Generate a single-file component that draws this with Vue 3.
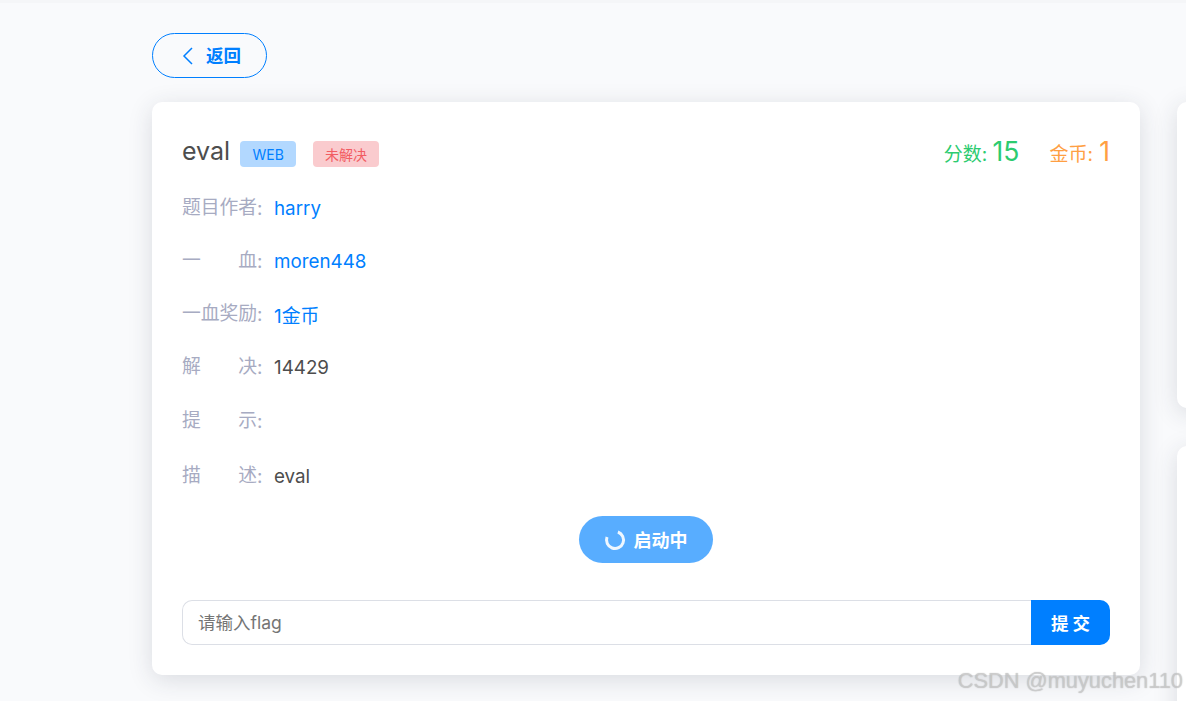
<script setup>
const rows = [
  { chars: ['题目作者'], value: 'harry', tone: 'blue' },
  { chars: ['一', '血'], value: 'moren448', tone: 'blue' },
  { chars: ['一血奖励'], value: '1金币', tone: 'blue' },
  { chars: ['解', '决'], value: '14429', tone: 'dark' },
  { chars: ['提', '示'], value: '', tone: 'dark' },
  { chars: ['描', '述'], value: 'eval', tone: 'dark' },
]
</script>

<template>
  <div class="page">
    <div class="topline"></div>
    <button class="back">
      <svg width="12" height="18" viewBox="0 0 12 18" fill="none"><path d="M10 1 2 9l8 8" stroke="#007fff" stroke-width="1.5"/></svg>
      <span>返回</span>
    </button>
    <div class="columns">
      <section class="card">
        <header class="head">
          <div class="title">
            <h1>eval</h1>
            <span class="tag tag-web">WEB</span>
            <span class="tag tag-red">未解决</span>
          </div>
          <div class="stats">
            <span class="green">分数: <b>15</b></span>
            <span class="orange">金币: <b>1</b></span>
          </div>
        </header>
        <div class="rows">
          <div v-for="r in rows" :key="r.chars[0]" class="row">
            <div class="label">
              <span v-for="c in r.chars" :key="c">{{ c }}</span>
            </div>
            <span class="colon">:</span>
            <span class="value" :class="r.tone">{{ r.value }}</span>
          </div>
        </div>
        <div class="launch-wrap">
          <button class="launch">
            <svg width="22" height="22" viewBox="0 0 22 22" fill="none"><path d="M13.9 3A8.5 8.5 0 1 1 3 8.1" stroke="#fff" stroke-width="3" opacity=".9"/></svg>
            <span>启动中</span>
          </button>
        </div>
        <div class="flag">
          <div class="input"><span>请输入flag</span></div>
          <button class="submit">提 交</button>
        </div>
      </section>
      <aside class="side">
        <div class="side-card one"></div>
        <div class="side-card two"></div>
      </aside>
    </div>
    <div class="mark">CSDN @muyuchen110</div>
  </div>
</template>

<style>
html, body { margin: 0; background: #f9fafc; }
</style>

<style scoped>
.page {
  position: relative;
  width: 1186px;
  height: 701px;
  overflow: hidden;
  background: #f9fafc;
  padding: 33px 0 0 152px;
  box-sizing: border-box;
  font-family: Inter, "Noto Sans CJK SC", sans-serif;
}
.topline { position: absolute; left: 0; right: 0; top: 0; height: 3px; background: #f5f6f8; }
button { font-family: inherit; border: 0; cursor: pointer; }
.back {
  display: flex;
  align-items: center;
  gap: 12px;
  width: 115px;
  height: 45px;
  padding: 0 0 3px 29px;
  box-sizing: border-box;
  border: 1px solid #007fff;
  border-radius: 23px;
  background: transparent;
  color: #007fff;
  font-size: 17.5px;
  font-weight: 700;
}
.back svg { margin-top: 3px; }
.columns { display: flex; gap: 37px; margin-top: 24px; }
.card {
  flex: none;
  width: 988px;
  height: 573px;
  box-sizing: border-box;
  padding: 30px;
  background: #fff;
  border-radius: 10px;
  box-shadow: 0 5px 25px rgba(40, 50, 70, .15);
  display: flex;
  flex-direction: column;
}
.head { display: flex; justify-content: space-between; align-items: center; height: 38px; }
.title { display: flex; align-items: center; padding-top: 6px; }
h1 { margin: 0 10px 0 0; font-size: 25px; font-weight: 400; color: #4d4d4d; line-height: 38px; position: relative; top: -3px; }
.tag {
  display: flex;
  align-items: center;
  justify-content: center;
  height: 26px;
  border-radius: 4px;
  font-size: 14px;
  box-sizing: border-box;
}
.tag-web { width: 56px; background: #b2d8ff; color: #007fff; margin-right: 17px; }
.tag-red { width: 66px; background: #facbce; color: #f25c62; }
.stats { display: flex; gap: 30px; font-size: 19px; }
.stats b { font-weight: 400; font-size: 26.5px; }
.orange b { padding-left: 1px; }
.green { color: #2ccb70; }
.orange { color: #ff9f43; }
.rows { margin-top: 22px; display: flex; flex-direction: column; gap: 21px; }
.row { display: flex; align-items: center; height: 32px; font-size: 18.8px; }
.row:nth-child(5) { margin-top: 1px; }
.row:nth-child(6) { margin-top: 2px; }
.label {
  width: 75px;
  display: flex;
  justify-content: space-between;
  color: #a7abc2;
  font-size: 18.8px;
  line-height: 32px;
  height: 32px;
  white-space: nowrap;
}
.colon { width: 17px; color: #a7abc2; }
.value.blue { color: #007fff; }
.value.dark { color: #4d4d4d; }
.launch-wrap { display: flex; justify-content: center; margin-top: 24px; }
.launch {
  display: flex;
  align-items: center;
  justify-content: center;
  gap: 8px;
  width: 134px;
  height: 47px;
  padding: 0 1px 2px 0;
  border-radius: 24px;
  background: #58adff;
  color: #fff;
  font-size: 18px;
  font-weight: 700;
}
.launch svg { margin-top: 2px; }
.flag { display: flex; height: 45px; margin-top: 37px; }
.input {
  flex: 1;
  display: flex;
  align-items: center;
  padding: 0 0 2px 15px;
  border: 1px solid #dcdfe6;
  border-right: 0;
  border-radius: 10px 0 0 10px;
  color: #757575;
  font-size: 17.5px;
}
.submit {
  width: 79px;
  background: #007fff;
  color: #fff;
  font-size: 17.5px;
  font-weight: 700;
  border-radius: 0 10px 10px 0;
}
.side { display: flex; flex-direction: column; gap: 38px; flex: none; width: 300px; }
.side-card { background: #fff; border-radius: 10px; box-shadow: 0 5px 25px rgba(40, 50, 70, .15); }
.one { height: 306px; }
.two { height: 320px; }
.mark {
  position: absolute;
  right: 3px;
  top: 668px;
  font-family: "Liberation Sans", sans-serif;
  font-size: 21.8px;
  color: rgba(215, 215, 215, .6);
  text-shadow: 0 0 1px rgba(90, 90, 90, .45);
}
</style>
